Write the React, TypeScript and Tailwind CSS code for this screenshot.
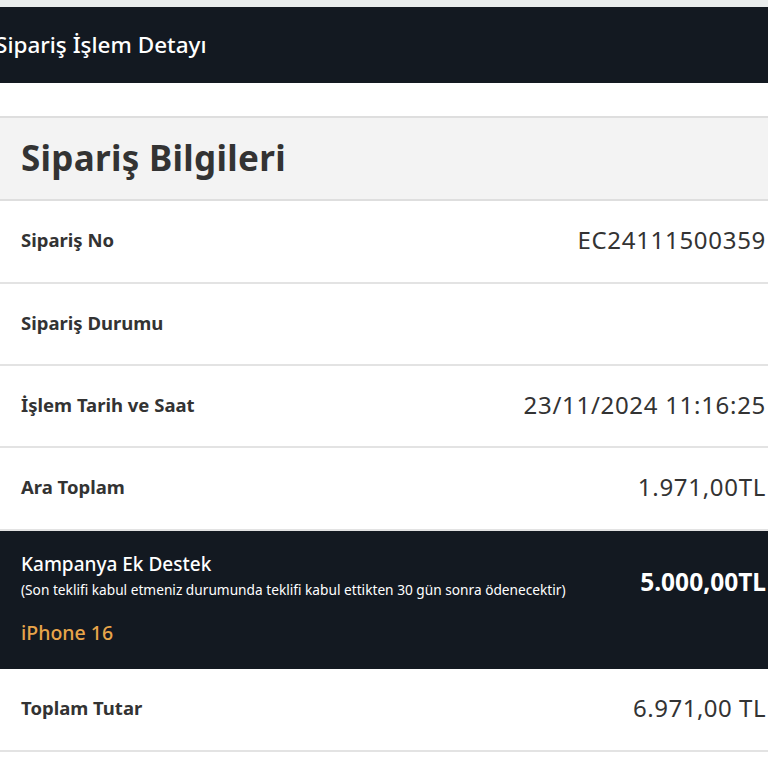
const rows = [
  { label: "Sipariş No", value: "EC24111500359", h: "h-[83px]" },
  { label: "Sipariş Durumu", value: "", h: "h-[82px]" },
  { label: "İşlem Tarih ve Saat", value: "23/11/2024 11:16:25", h: "h-[82px]" },
  { label: "Ara Toplam", value: "1.971,00TL", h: "h-[83px]" },
];

export default function App() {
  return (
    <div className="min-h-[768px] w-[768px] overflow-hidden bg-white font-['Noto_Sans',sans-serif]">
      <div className="h-[7px] bg-[#e9ecec]" />
      <div className="flex h-[76px] items-center bg-[#131921]">
        <span className="-ml-[5px] text-[22.5px] font-medium text-white">Sipariş İşlem Detayı</span>
      </div>

      <div className="mt-[33px]">
        <div className="flex h-[85px] items-center border-y-2 border-[#dedede] bg-[#f3f3f3] px-[21px]">
          <h2 className="text-[35px] font-bold tracking-[0.3px] text-[#333]">Sipariş Bilgileri</h2>
        </div>

        {rows.map((row) => (
          <div
            key={row.label}
            className={`flex ${row.h} items-center justify-between border-b-2 border-[#e3e3e3] pb-[3px] pl-[21px] pr-[2px]`}
          >
            <span className="text-[18.5px] font-bold text-[#333]">{row.label}</span>
            <span className="text-[24px] tracking-[0.7px] text-[#333]">{row.value}</span>
          </div>
        ))}

        <div className="flex h-[138px] items-start justify-between bg-[#131921] pl-[21px] pr-[2px] pt-[21px]">
          <div className="flex flex-col">
            <span className="text-[19px] font-medium leading-[24px] text-white">Kampanya Ek Destek</span>
            <span className="mt-[6px] text-[13.7px] leading-[16px] text-white">
              (Son teklifi kabul etmeniz durumunda teklifi kabul ettikten 30 gün sonra ödenecektir)
            </span>
            <span className="mt-[23px] text-[19.5px] font-medium leading-[24px] text-[#e8a54a]">iPhone 16</span>
          </div>
          <span className="mt-[17px] text-[24.5px] font-bold leading-[26px] text-white">5.000,00TL</span>
        </div>

        <div className="flex h-[83px] items-center justify-between border-b-2 border-[#e3e3e3] pb-[3px] pl-[21px] pr-[2px]">
          <span className="text-[18.5px] font-bold text-[#333]">Toplam Tutar</span>
          <span className="text-[24px] tracking-[0.5px] text-[#333]">6.971,00 TL</span>
        </div>
      </div>
    </div>
  );
}
